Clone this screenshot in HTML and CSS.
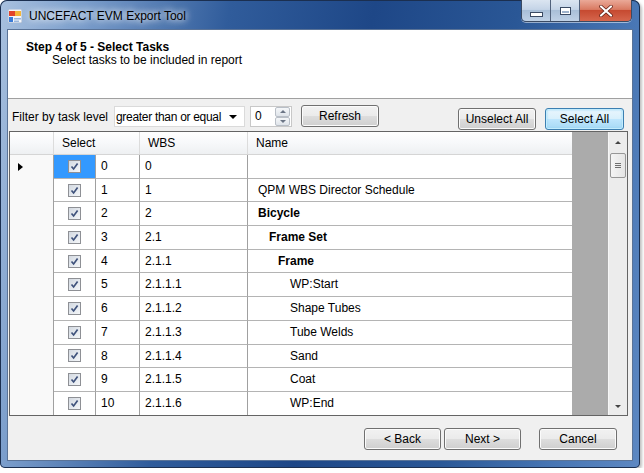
FILE: index.html
```html
<!DOCTYPE html>
<html>
<head>
<meta charset="utf-8">
<link rel="stylesheet" href="styles.css">
</head>
<body>
<div class="window">
  <div class="titlebar">
    <div class="title">
      <svg class="appicon" width="14" height="14" viewBox="0 0 14 14">
        <rect x="0" y="0" width="14" height="14" fill="#f3f6fa" stroke="#8aa0bf" stroke-width="0.8"/>
        <rect x="1" y="2" width="6" height="5" fill="#e2452c"/>
        <rect x="7" y="2" width="6" height="5" fill="#f4b63a"/>
        <rect x="1" y="8" width="4" height="5" fill="#3b7bd6"/>
        <rect x="6" y="9" width="7" height="1.5" fill="#9bb7dd"/>
        <rect x="6" y="11.5" width="5" height="1.5" fill="#9bb7dd"/>
      </svg>
      <span class="title-text">UNCEFACT EVM Export Tool</span>
    </div>
    <div class="wbtns">
      <div class="wb wb-min"><span class="g-min"></span></div>
      <div class="wb wb-max"><span class="g-max"></span></div>
      <div class="wb wb-close">
        <svg width="14" height="12" viewBox="0 0 14 12"><path d="M2 1.5 L12 10.5 M12 1.5 L2 10.5" stroke="#5a1a10" stroke-width="3.6" stroke-linecap="round"/><path d="M2 1.5 L12 10.5 M12 1.5 L2 10.5" stroke="#ffffff" stroke-width="2.2" stroke-linecap="round"/></svg>
      </div>
    </div>
  </div>
  <div class="client">
    <div class="header">
      <div class="step">Step 4 of 5 - Select Tasks</div>
      <div class="sub">Select tasks to be included in report</div>
    </div>
    <div class="toolbar">
      <span class="lbl">Filter by task level</span>
      <div class="combo"><span>greater than or equal</span><span class="dd-arrow"></span></div>
      <div class="spin">
        <span class="spin-val">0</span>
        <div class="spinbtns">
          <div class="sbtn"><span class="tri-up"></span></div>
          <div class="sbtn"><span class="tri-down"></span></div>
        </div>
      </div>
      <button class="btn btn-refresh">Refresh</button>
      <button class="btn btn-unselect">Unselect All</button>
      <button class="btn btn-default btn-selectall">Select All</button>
    </div>
    <div class="grid">
      <div class="cols">
        <div class="hrow">
          <div class="hc"></div>
          <div class="hc">Select</div>
          <div class="hc">WBS</div>
          <div class="hc last">Name</div>
        </div>
        <div class="row">
          <div class="rh current"></div>
          <div class="c sel selected"><span class="cb"><svg width="9" height="9" viewBox="0 0 9 9"><path d="M1.5 4.5 L3.6 7 L7.6 1.6" fill="none" stroke="#3f527c" stroke-width="1.7"/></svg></span></div>
          <div class="c">0</div><div class="c">0</div><div class="c nm"></div>
        </div>
        <div class="row">
          <div class="rh"></div>
          <div class="c sel"><span class="cb"><svg width="9" height="9" viewBox="0 0 9 9"><path d="M1.5 4.5 L3.6 7 L7.6 1.6" fill="none" stroke="#3f527c" stroke-width="1.7"/></svg></span></div>
          <div class="c">1</div><div class="c">1</div><div class="c nm l0">QPM WBS Director Schedule</div>
        </div>
        <div class="row">
          <div class="rh"></div>
          <div class="c sel"><span class="cb"><svg width="9" height="9" viewBox="0 0 9 9"><path d="M1.5 4.5 L3.6 7 L7.6 1.6" fill="none" stroke="#3f527c" stroke-width="1.7"/></svg></span></div>
          <div class="c">2</div><div class="c">2</div><div class="c nm l0 b">Bicycle</div>
        </div>
        <div class="row">
          <div class="rh"></div>
          <div class="c sel"><span class="cb"><svg width="9" height="9" viewBox="0 0 9 9"><path d="M1.5 4.5 L3.6 7 L7.6 1.6" fill="none" stroke="#3f527c" stroke-width="1.7"/></svg></span></div>
          <div class="c">3</div><div class="c">2.1</div><div class="c nm l1 b">Frame Set</div>
        </div>
        <div class="row">
          <div class="rh"></div>
          <div class="c sel"><span class="cb"><svg width="9" height="9" viewBox="0 0 9 9"><path d="M1.5 4.5 L3.6 7 L7.6 1.6" fill="none" stroke="#3f527c" stroke-width="1.7"/></svg></span></div>
          <div class="c">4</div><div class="c">2.1.1</div><div class="c nm l2 b">Frame</div>
        </div>
        <div class="row">
          <div class="rh"></div>
          <div class="c sel"><span class="cb"><svg width="9" height="9" viewBox="0 0 9 9"><path d="M1.5 4.5 L3.6 7 L7.6 1.6" fill="none" stroke="#3f527c" stroke-width="1.7"/></svg></span></div>
          <div class="c">5</div><div class="c">2.1.1.1</div><div class="c nm l3">WP:Start</div>
        </div>
        <div class="row">
          <div class="rh"></div>
          <div class="c sel"><span class="cb"><svg width="9" height="9" viewBox="0 0 9 9"><path d="M1.5 4.5 L3.6 7 L7.6 1.6" fill="none" stroke="#3f527c" stroke-width="1.7"/></svg></span></div>
          <div class="c">6</div><div class="c">2.1.1.2</div><div class="c nm l3">Shape Tubes</div>
        </div>
        <div class="row">
          <div class="rh"></div>
          <div class="c sel"><span class="cb"><svg width="9" height="9" viewBox="0 0 9 9"><path d="M1.5 4.5 L3.6 7 L7.6 1.6" fill="none" stroke="#3f527c" stroke-width="1.7"/></svg></span></div>
          <div class="c">7</div><div class="c">2.1.1.3</div><div class="c nm l3">Tube Welds</div>
        </div>
        <div class="row">
          <div class="rh"></div>
          <div class="c sel"><span class="cb"><svg width="9" height="9" viewBox="0 0 9 9"><path d="M1.5 4.5 L3.6 7 L7.6 1.6" fill="none" stroke="#3f527c" stroke-width="1.7"/></svg></span></div>
          <div class="c">8</div><div class="c">2.1.1.4</div><div class="c nm l3">Sand</div>
        </div>
        <div class="row">
          <div class="rh"></div>
          <div class="c sel"><span class="cb"><svg width="9" height="9" viewBox="0 0 9 9"><path d="M1.5 4.5 L3.6 7 L7.6 1.6" fill="none" stroke="#3f527c" stroke-width="1.7"/></svg></span></div>
          <div class="c">9</div><div class="c">2.1.1.5</div><div class="c nm l3">Coat</div>
        </div>
        <div class="row">
          <div class="rh"></div>
          <div class="c sel"><span class="cb"><svg width="9" height="9" viewBox="0 0 9 9"><path d="M1.5 4.5 L3.6 7 L7.6 1.6" fill="none" stroke="#3f527c" stroke-width="1.7"/></svg></span></div>
          <div class="c">10</div><div class="c">2.1.1.6</div><div class="c nm l3">WP:End</div>
        </div>
      </div>
      <div class="empty"></div>
      <div class="vscroll">
        <div class="sb-up"><span class="tri-up dark"></span></div>
        <div class="thumb"><span class="grip"></span></div>
        <div class="track"></div>
        <div class="sb-down"><span class="tri-down dark"></span></div>
      </div>
    </div>
    <div class="footer">
      <button class="btn btn-nav">&lt; Back</button>
      <button class="btn btn-nav">Next &gt;</button>
      <button class="btn btn-cancel">Cancel</button>
    </div>
  </div>
</div>
</body>
</html>
```

FILE: styles.css
```css
html, body {
  margin: 0;
  padding: 0;
  background: #ffffff;
}
body {
  font-family: "Liberation Sans", Arial, sans-serif;
  font-size: 12px;
  color: #000;
}
.window {
  width: 640px;
  height: 468px;
  box-sizing: border-box;
  padding: 0 8px 8px;
  border-radius: 7px 7px 5px 5px;
  background: linear-gradient(100deg, #a9c1df 0%, #7a9dcb 12%, #305c9b 32%, #1e4787 52%, #2a5796 72%, #4876b4 88%, #5d88c2 100%);
  box-shadow: inset 0 0 0 1px #1b2f50, 2px 2px 3px rgba(0,0,0,0.25);
}
.titlebar {
  height: 30px;
  margin: 0 -8px;
  padding: 0 8px;
  display: flex;
  justify-content: space-between;
  align-items: flex-start;
}
.title {
  display: flex;
  align-items: center;
  margin-top: 8px;
}
.appicon {
  display: block;
}
.title-text {
  margin-left: 7px;
  margin-top: 1px;
  font-size: 12px;
  color: #000;
  text-shadow: 0 0 6px #fff, 0 0 10px rgba(255,255,255,0.9);
}
.wbtns {
  display: flex;
  height: 21px;
  border: 1px solid #3a4a63;
  border-top: none;
  border-radius: 0 0 5px 5px;
  overflow: hidden;
  box-shadow: 0 1px 0 rgba(255,255,255,0.5);
}
.wb {
  height: 21px;
  display: flex;
  align-items: center;
  justify-content: center;
}
.wb-min, .wb-max {
  width: 28px;
  border-right: 1px solid #51627c;
  background: linear-gradient(#dbe5f1 0%, #c4d4e7 45%, #a9bfd8 50%, #bfd1e6 100%);
}
.wb-close {
  width: 51px;
  background: linear-gradient(#eaa998 0%, #d97a62 45%, #c64a31 50%, #d5664d 100%);
}
.g-min {
  width: 11px;
  height: 3px;
  margin-top: 7px;
  background: #fff;
  border: 1px solid #3a4a63;
}
.g-max {
  width: 9px;
  height: 6px;
  border: 1px solid #3a4a63;
  box-shadow: inset 0 0 0 1px #fff, inset 0 2px 0 1px #fff;
  background: #9fb3cc;
}
.client {
  height: 430px;
  background: #f0f0f0;
  box-shadow: 0 0 0 1px #5a7397;
  display: flex;
  flex-direction: column;
}
.header {
  flex: none;
  background: #ffffff;
  border-bottom: 1px solid #a0a0a0;
  padding-top: 11px;
  box-sizing: content-box;
  height: 57px;
}
.step {
  font-weight: bold;
  line-height: 13px;
  padding-left: 18px;
}
.sub {
  line-height: 12px;
  padding-left: 44px;
}
.toolbar {
  height: 32px;
  flex: none;
  display: flex;
  align-items: flex-start;
  padding: 0 8px 0 4px;
}
.lbl {
  width: 102px;
  margin-top: 11px;
  line-height: 14px;
  white-space: nowrap;
}
.combo {
  width: 131px;
  height: 21px;
  margin-top: 7px;
  box-sizing: border-box;
  border: 1px solid #dadada;
  background: #fff;
  display: flex;
  align-items: center;
  padding-left: 1px;
  white-space: nowrap;
  overflow: hidden;
  letter-spacing: -0.3px;
}
.dd-arrow {
  margin-left: auto;
  margin-right: 7px;
  border-left: 4px solid transparent;
  border-right: 4px solid transparent;
  border-top: 4px solid #000;
}
.spin {
  width: 42px;
  height: 21px;
  margin-top: 7px;
  margin-left: 5px;
  box-sizing: border-box;
  border: 1px solid #c8c8c8;
  background: #fff;
  display: flex;
  align-items: stretch;
}
.spin-val {
  padding-left: 4px;
  line-height: 19px;
}
.spinbtns {
  margin-left: auto;
  margin-right: 1px;
  width: 15px;
  display: flex;
  flex-direction: column;
}
.sbtn {
  flex: 1;
  display: flex;
  align-items: center;
  justify-content: center;
  border: 1px solid #b9bfc7;
  border-radius: 2px;
  background: linear-gradient(#f5f7f9, #dfe4ea);
}
.tri-up {
  border-left: 3px solid transparent;
  border-right: 3px solid transparent;
  border-bottom: 3px solid #6b7585;
}
.tri-down {
  border-left: 3px solid transparent;
  border-right: 3px solid transparent;
  border-top: 3px solid #6b7585;
}
.tri-up.dark { border-bottom-color: #444; }
.tri-down.dark { border-top-color: #444; }
.btn {
  font-family: "Liberation Sans", Arial, sans-serif;
  font-size: 12px;
  color: #000;
  height: 22px;
  box-sizing: border-box;
  border: 1px solid #707070;
  border-radius: 3px;
  padding: 0;
  background: linear-gradient(#f2f2f2 0%, #ebebeb 48%, #dddddd 52%, #cfcfcf 100%);
  box-shadow: inset 0 0 0 1px #fbfbfb;
}
.btn-refresh {
  width: 78px;
  margin-top: 6px;
  margin-left: 9px;
}
.btn-unselect {
  width: 78px;
  margin-top: 9px;
  margin-left: auto;
}
.btn-selectall {
  width: 79px;
  margin-top: 9px;
  margin-left: 9px;
}
.btn-default {
  border-color: #3c7fb1;
  background: linear-gradient(#eaf6fd 0%, #d9f0fc 48%, #bee6fd 52%, #a7d9f5 100%);
  box-shadow: inset 0 0 0 1px #c3ecfd, inset 0 0 2px 1px #8fd6f7;
}
.grid {
  height: 285px;
  flex: none;
  margin: 0 4px 0 1px;
  box-sizing: border-box;
  border: 1px solid #646464;
  display: flex;
  overflow: hidden;
}
.cols {
  width: 562px;
  flex: none;
  background: #fff;
  overflow: hidden;
}
.hrow {
  height: 23px;
  display: grid;
  grid-template-columns: 44px 86px 108px 324px;
  border-bottom: 1px solid #d5d5d5;
  box-sizing: border-box;
  background: linear-gradient(#ffffff 0%, #f7f8fa 50%, #eef0f2 100%);
}
.hc {
  border-right: 1px solid #dcdcdc;
  padding-left: 8px;
  line-height: 22px;
}
.hc.last {
  border-right: none;
}
.row {
  height: 23.7px;
  display: grid;
  grid-template-columns: 44px 42px 44px 108px 324px;
}
.rh {
  border-right: 1px solid #a0a0a0;
  background: #f9f9f9;
  position: relative;
}
.rh.current::before {
  content: "";
  position: absolute;
  left: 8px;
  top: 8px;
  border-left: 5px solid #000;
  border-top: 4px solid transparent;
  border-bottom: 4px solid transparent;
}
.c {
  border-right: 1px solid #a0a0a0;
  border-bottom: 1px solid #b4b4b4;
  box-sizing: border-box;
  padding-left: 5px;
  line-height: 23px;
  white-space: nowrap;
  overflow: hidden;
}
.c.nm {
  border-right: none;
}
.c.sel {
  padding-left: 0;
  display: flex;
  align-items: center;
  justify-content: center;
}
.c.selected {
  background: #3399ff;
}
.cb {
  width: 13px;
  height: 13px;
  box-sizing: border-box;
  border: 1px solid #8e9095;
  background: linear-gradient(135deg, #d3d9e1 0%, #e7ebf0 60%, #f4f6f8 100%);
  display: flex;
  align-items: center;
  justify-content: center;
}
.cb svg {
  display: block;
}
.l0 { padding-left: 10px; }
.l1 { padding-left: 21px; }
.l2 { padding-left: 30px; }
.l3 { padding-left: 42px; }
.b { font-weight: bold; }
.empty {
  width: 36px;
  flex: none;
  background: #ababab;
}
.vscroll {
  width: 19px;
  flex: none;
  display: flex;
  flex-direction: column;
  background: #ececec;
  border-left: 1px solid #f6f6f6;
  box-sizing: border-box;
}
.sb-up {
  height: 21px;
  display: flex;
  align-items: center;
  justify-content: center;
}
.sb-down {
  height: 17px;
  display: flex;
  align-items: center;
  justify-content: center;
}
.thumb {
  height: 25px;
  margin: 0 1px;
  box-sizing: border-box;
  border: 1px solid #979797;
  border-radius: 2px;
  background: linear-gradient(90deg, #f5f5f5, #e4e4e4);
  display: flex;
  align-items: center;
  justify-content: center;
}
.grip {
  width: 6px;
  height: 5px;
  background: repeating-linear-gradient(#6f6f6f 0 1px, transparent 1px 2px);
}
.track {
  flex: 1;
}
.footer {
  flex: 1;
  display: flex;
  justify-content: flex-end;
  align-items: flex-start;
  padding: 12px 15px 0 0;
}
.btn-nav {
  width: 77px;
  margin-left: 3px;
}
.btn-cancel {
  width: 78px;
  margin-left: 18px;
}
```
